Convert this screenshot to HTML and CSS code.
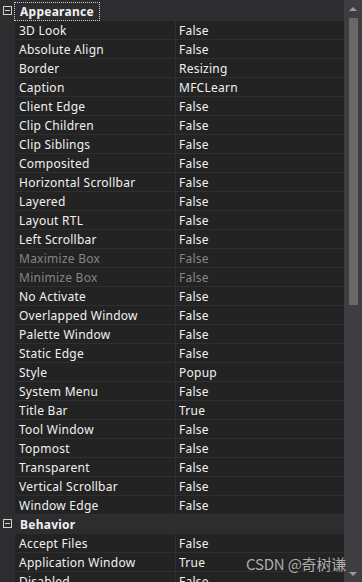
FILE: index.html
```html
<!DOCTYPE html>
<html>
<head>
<meta charset="utf-8">
<link rel="stylesheet" href="styles.css">
</head>
<body>
<div class="grid">
  <div class="list">
    <div class="cat first"><span class="box"></span><span class="cat-label focus">Appearance</span></div>
    <div class="row"><div class="gut"></div><div class="cells"><div class="name">3D Look</div><div class="val">False</div></div></div>
    <div class="row"><div class="gut"></div><div class="cells"><div class="name">Absolute Align</div><div class="val">False</div></div></div>
    <div class="row"><div class="gut"></div><div class="cells"><div class="name">Border</div><div class="val">Resizing</div></div></div>
    <div class="row"><div class="gut"></div><div class="cells"><div class="name">Caption</div><div class="val">MFCLearn</div></div></div>
    <div class="row"><div class="gut"></div><div class="cells"><div class="name">Client Edge</div><div class="val">False</div></div></div>
    <div class="row"><div class="gut"></div><div class="cells"><div class="name">Clip Children</div><div class="val">False</div></div></div>
    <div class="row"><div class="gut"></div><div class="cells"><div class="name">Clip Siblings</div><div class="val">False</div></div></div>
    <div class="row"><div class="gut"></div><div class="cells"><div class="name">Composited</div><div class="val">False</div></div></div>
    <div class="row"><div class="gut"></div><div class="cells"><div class="name">Horizontal Scrollbar</div><div class="val">False</div></div></div>
    <div class="row"><div class="gut"></div><div class="cells"><div class="name">Layered</div><div class="val">False</div></div></div>
    <div class="row"><div class="gut"></div><div class="cells"><div class="name">Layout RTL</div><div class="val">False</div></div></div>
    <div class="row"><div class="gut"></div><div class="cells"><div class="name">Left Scrollbar</div><div class="val">False</div></div></div>
    <div class="row dis"><div class="gut"></div><div class="cells"><div class="name">Maximize Box</div><div class="val">False</div></div></div>
    <div class="row dis"><div class="gut"></div><div class="cells"><div class="name">Minimize Box</div><div class="val">False</div></div></div>
    <div class="row"><div class="gut"></div><div class="cells"><div class="name">No Activate</div><div class="val">False</div></div></div>
    <div class="row"><div class="gut"></div><div class="cells"><div class="name">Overlapped Window</div><div class="val">False</div></div></div>
    <div class="row"><div class="gut"></div><div class="cells"><div class="name">Palette Window</div><div class="val">False</div></div></div>
    <div class="row"><div class="gut"></div><div class="cells"><div class="name">Static Edge</div><div class="val">False</div></div></div>
    <div class="row"><div class="gut"></div><div class="cells"><div class="name">Style</div><div class="val">Popup</div></div></div>
    <div class="row"><div class="gut"></div><div class="cells"><div class="name">System Menu</div><div class="val">False</div></div></div>
    <div class="row"><div class="gut"></div><div class="cells"><div class="name">Title Bar</div><div class="val">True</div></div></div>
    <div class="row"><div class="gut"></div><div class="cells"><div class="name">Tool Window</div><div class="val">False</div></div></div>
    <div class="row"><div class="gut"></div><div class="cells"><div class="name">Topmost</div><div class="val">False</div></div></div>
    <div class="row"><div class="gut"></div><div class="cells"><div class="name">Transparent</div><div class="val">False</div></div></div>
    <div class="row"><div class="gut"></div><div class="cells"><div class="name">Vertical Scrollbar</div><div class="val">False</div></div></div>
    <div class="row"><div class="gut"></div><div class="cells"><div class="name">Window Edge</div><div class="val">False</div></div></div>
    <div class="cat"><span class="box"></span><span class="cat-label">Behavior</span></div>
    <div class="row"><div class="gut"></div><div class="cells"><div class="name">Accept Files</div><div class="val">False</div></div></div>
    <div class="row"><div class="gut"></div><div class="cells"><div class="name">Application Window</div><div class="val">True</div></div></div>
    <div class="row"><div class="gut"></div><div class="cells"><div class="name">Disabled</div><div class="val">False</div></div></div>
  </div>
  <div class="sbar">
    <div class="arrow up"></div>
    <div class="thumb"></div>
    <div class="spacer"></div>
    <div class="arrow down"></div>
  </div>
  <div class="watermark">CSDN @奇树谦</div>
</div>
</body>
</html>
```

FILE: styles.css
```css
html, body {
  margin: 0;
  padding: 0;
  background: #2d2d30;
}
body {
  width: 362px;
  height: 582px;
  overflow: hidden;
  font-family: "Noto Sans", "Noto Sans CJK SC", sans-serif;
  font-size: 12px;
  letter-spacing: 0.25px;
  color: #f1f1f1;
}
.grid {
  position: relative;
  display: flex;
  width: 362px;
  height: 582px;
}
.list {
  width: 344px;
  height: 582px;
  overflow: hidden;
  background: #2d2d30;
}
.cat {
  height: 19px;
  display: flex;
  align-items: flex-start;
  background: #2d2d30;
}
.cat.first {
  margin-top: 2px;
}
.box {
  width: 7px;
  height: 7px;
  border: 1px solid #d0d0d0;
  margin-left: 3px;
  margin-right: 2px;
  position: relative;
  margin-top: 4px;
}
.box::after {
  content: "";
  position: absolute;
  left: 1px;
  top: 3px;
  width: 5px;
  height: 1px;
  background: #d0d0d0;
}
.cat-label {
  font-weight: bold;
  height: 16px;
  padding: 1px 5px 0 5px;
  line-height: 16px;
  border: 1px solid transparent;
}
.cat-label.focus {
  border: 1px dotted #cfcfcf;
}
.row {
  display: flex;
  height: 19px;
}
.gut {
  width: 15px;
  flex: none;
  background: #2d2d30;
}
.cells {
  flex: 1;
  display: flex;
  background: #232323;
  border-bottom: 1px solid #2f2f31;
}
.name {
  width: 156px;
  padding-left: 4px;
  padding-top: 2px;
  border-right: 1px solid #2f2f31;
  line-height: 16px;
  white-space: nowrap;
}
.val {
  flex: 1;
  padding-left: 3px;
  padding-top: 2px;
  line-height: 16px;
  white-space: nowrap;
}
.row.dis .name, .row.dis .val {
  color: #858585;
}
.sbar {
  width: 18px;
  height: 582px;
  background: #3e3e42;
  display: flex;
  flex-direction: column;
  align-items: center;
}
.arrow {
  width: 0;
  height: 0;
  border-left: 4px solid transparent;
  border-right: 4px solid transparent;
}
.arrow.up {
  margin-top: 7px;
  border-bottom: 4px solid #999999;
}
.arrow.down {
  margin-bottom: 6px;
  border-top: 4px solid #999999;
}
.thumb {
  margin-top: 7px;
  width: 9px;
  height: 287px;
  background: #686868;
}
.spacer {
  flex: 1;
}
.watermark {
  position: absolute;
  left: 246px;
  top: 554px;
  font-family: "Noto Sans CJK SC", sans-serif;
  font-size: 15px;
  letter-spacing: -0.2px;
  line-height: 20px;
  color: rgba(220, 220, 220, 0.75);
  white-space: nowrap;
}
```
